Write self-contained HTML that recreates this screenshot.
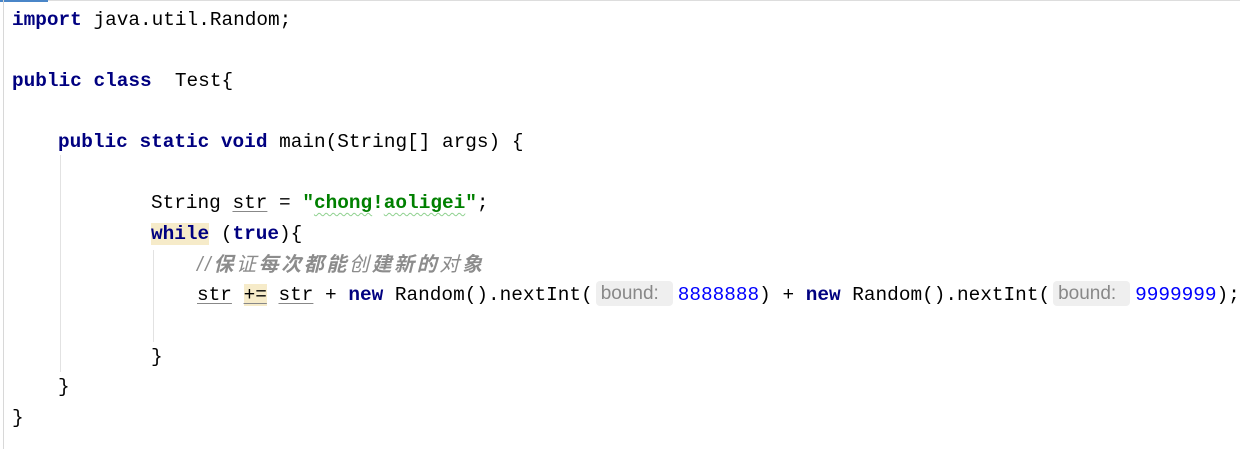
<!DOCTYPE html><html><head><style>
body{margin:0;width:1240px;height:449px;background:#fff;overflow:hidden;position:relative;font-family:"Liberation Mono",monospace;font-size:19.4px;}
.l{position:absolute;white-space:pre;height:30px;line-height:30px;}
.k{color:#000080;font-weight:bold}
.s{color:#008000;font-weight:bold}
.n{color:#0000ff}
.u{text-decoration:underline;text-decoration-color:#888;text-underline-offset:3px}
.h{background:#f6ebc9}
.hint{display:inline-block;background:#efefef;color:#888;font-family:"Liberation Sans",sans-serif;font-size:19px;border-radius:4px;line-height:25px;vertical-align:1px;}
.c{color:#8c8c8c;font-style:italic;font-family:"Liberation Sans","Noto Sans CJK SC",sans-serif;font-size:20px;letter-spacing:2.6px}
.c b{font-weight:bold}
.g{position:absolute;background:#e2e2e2;width:1px}
.w{text-decoration:underline wavy #8fd18f;text-underline-offset:4px;text-decoration-thickness:1px}
</style></head><body>
<div style="position:absolute;left:0;top:0;width:48px;height:2px;background:#4a86c8"></div>
<div style="position:absolute;left:48px;top:0;width:1192px;height:1px;background:#ddd"></div>
<div class="g" style="left:3px;top:0;height:449px;background:#d8d8d8"></div>
<div class="g" style="left:60px;top:155px;height:217px"></div>
<div class="g" style="left:153px;top:250px;height:92px"></div>
<div class="l" style="left:12px;top:5px"><span class="k">import</span> java.util.Random;</div>
<div class="l" style="left:12px;top:66px"><span class="k">public class</span>  Test{</div>
<div class="l" style="left:58px;top:127px"><span class="k">public static void</span> main(String[] args) {</div>
<div class="l" style="left:151px;top:188px">String <span class="u">str</span> = <span class="s">"<span class="w">chong</span>!<span class="w">aoligei</span>"</span>;</div>
<div class="l" style="left:151px;top:219px"><span class="k h">while</span> (<span class="k">true</span>){</div>
<div class="l c" style="left:197px;top:250px">//<b>保</b>证<b>每次都能</b>创<b>建新的</b>对<b>象</b></div>
<div class="l" style="left:197px;top:280px"><span class="u">str</span> <span class="h u">+=</span> <span class="u">str</span> + <span class="k">new</span> Random().nextInt(<span class="hint" style="width:77px;margin:0 5px 0 3px;padding-left:5px;box-sizing:border-box">bound:</span><span class="n">8888888</span>) + <span class="k">new</span> Random().nextInt(<span class="hint" style="width:77px;margin:0 5px 0 3px;padding-left:5px;box-sizing:border-box">bound:</span><span class="n">9999999</span>);</div>
<div class="l" style="left:151px;top:342px">}</div>
<div class="l" style="left:58px;top:372px">}</div>
<div class="l" style="left:12px;top:403px">}</div>
</body></html>
